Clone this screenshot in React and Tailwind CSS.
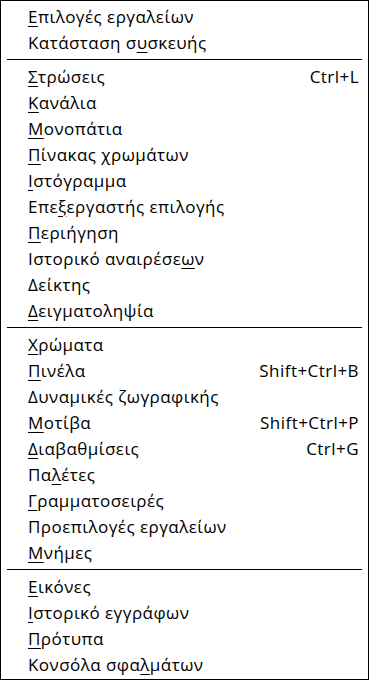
import React from 'react'

// Ομάδες μενού: '_' πριν από το γράμμα συντόμευσης (mnemonic)
const groups = [
  [
    { label: '_Επιλογές εργαλείων' },
    { label: 'Κατάσταση σ_υσκευής' },
  ],
  [
    { label: '_Στρώσεις', shortcut: 'Ctrl+L' },
    { label: '_Κανάλια' },
    { label: '_Μονοπάτια' },
    { label: '_Πίνακας χρωμάτων' },
    { label: '_Ιστόγραμμα' },
    { label: 'Επε_ξεργαστής επιλογής' },
    { label: '_Περιήγηση' },
    { label: 'Ιστορικό αναιρέσε_ων' },
    { label: 'Δείκτης' },
    { label: '_Δειγματοληψία' },
  ],
  [
    { label: '_Χρώματα' },
    { label: '_Πινέλα', shortcut: 'Shift+Ctrl+B' },
    { label: 'Δυναμικές ζωγραφικής' },
    { label: '_Μοτίβα', shortcut: 'Shift+Ctrl+P' },
    { label: '_Διαβαθμίσεις', shortcut: 'Ctrl+G' },
    { label: 'Πα_λέτες' },
    { label: '_Γραμματοσειρές' },
    { label: 'Προεπιλογές εργαλείων' },
    { label: '_Μνήμες' },
  ],
  [
    { label: '_Εικόνες' },
    { label: '_Ιστορικό εγγράφων' },
    { label: '_Πρότυπα' },
    { label: 'Κονσόλα σφα_λμάτων' },
  ],
]

function Label({ text }) {
  const i = text.indexOf('_')
  if (i < 0) return <span>{text}</span>
  return (
    <span>
      {text.slice(0, i)}
      <span className="underline underline-offset-[3px] decoration-1">{text[i + 1]}</span>
      {text.slice(i + 2)}
    </span>
  )
}

export default function App() {
  return (
    <div
      className="w-[369px] h-[680px] bg-white border border-black flex flex-col pt-[2px] pb-[2px] text-[17px] leading-none tracking-[0.45px] text-black"
      style={{ fontFamily: '"Open Sans", "DejaVu Sans", sans-serif' }}
    >
      {groups.map((group, gi) => (
        <div key={gi} className="flex flex-col">
          {gi > 0 && (
            <div className="h-[8px] flex items-center px-[6px]">
              <div className="h-px w-full bg-black" />
            </div>
          )}
          {group.map((item) => (
            <div
              key={item.label}
              className="h-[26px] flex items-center justify-between pl-[27px] pr-[9px] whitespace-nowrap"
            >
              <Label text={item.label} />
              {item.shortcut && <span>{item.shortcut}</span>}
            </div>
          ))}
        </div>
      ))}
    </div>
  )
}
